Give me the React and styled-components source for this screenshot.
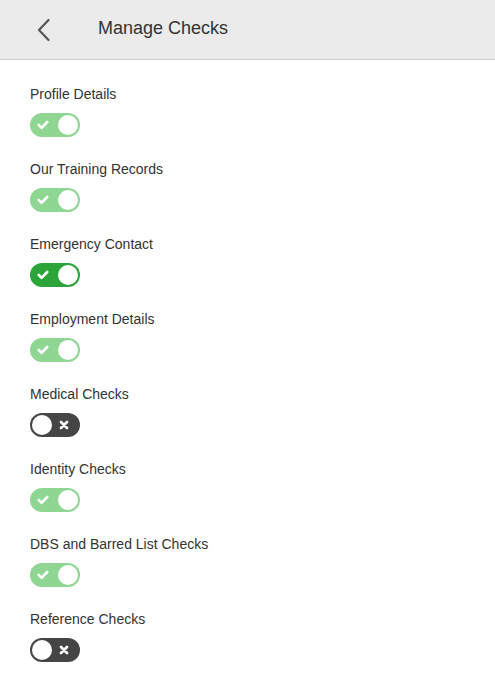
import React from "react";
import styled, { createGlobalStyle } from "styled-components";

const Global = createGlobalStyle`
  html, body { margin: 0; padding: 0; background: #fff; }
  body { font-family: "Liberation Sans", Arial, Helvetica, sans-serif; color: #333; }
`;

const Page = styled.div`
  width: 495px;
  min-height: 682px;
  background: #fff;
`;

const Header = styled.header`
  height: 59px;
  background: #ebebeb;
  border-bottom: 1px solid #cfcfcf;
  display: flex;
  align-items: center;
`;

const BackButton = styled.button`
  width: 98px;
  height: 59px;
  padding: 0 0 0 37px;
  border: 0;
  background: transparent;
  display: flex;
  align-items: center;
  cursor: pointer;
`;

const Title = styled.h1`
  margin: 0;
  font-family: "Liberation Sans", Arial, Helvetica, sans-serif;
  font-size: 18px;
  font-weight: 400;
  color: #333;
  line-height: 22px;
  padding-bottom: 4px;
`;

const List = styled.div`
  padding: 24px 30px 0;
  display: flex;
  flex-direction: column;
  gap: 22px;
`;

const Row = styled.div`
  display: flex;
  flex-direction: column;
  align-items: flex-start;
  gap: 9px;
`;

const Label = styled.div`
  font-size: 14px;
  line-height: 20px;
  color: #333;
`;

const Track = styled.div`
  position: relative;
  width: 50px;
  height: 24px;
  border-radius: 12px;
  background: ${(p) => (p.$on ? (p.$strong ? "#2ba43a" : "#8fd693") : "#454545")};
  display: flex;
  align-items: center;
  justify-content: ${(p) => (p.$on ? "flex-end" : "flex-start")};
  padding: 0 2px;
  box-sizing: border-box;
`;

const Knob = styled.div`
  width: 20px;
  height: 20px;
  border-radius: 50%;
  background: #fff;
`;

const Mark = styled.svg`
  position: absolute;
  top: 50%;
  transform: translateY(-50%);
  left: ${(p) => p.$left}px;
`;

function Toggle({ on, strong }) {
  return (
    <Track $on={on} $strong={strong}>
      {on ? (
        <Mark $left={7} width="12" height="10" viewBox="0 0 12 10">
          <path d="M1.8 5 L4.6 7.8 L10.2 2" fill="none" stroke="#fff" strokeWidth="2.6" strokeLinecap="round" strokeLinejoin="round" />
        </Mark>
      ) : (
        <Mark $left={29} width="10" height="10" viewBox="0 0 10 10">
          <path d="M2 2 L8 8 M8 2 L2 8" fill="none" stroke="#fff" strokeWidth="2.8" strokeLinecap="round" />
        </Mark>
      )}
      <Knob />
    </Track>
  );
}

const items = [
  { label: "Profile Details", on: true },
  { label: "Our Training Records", on: true },
  { label: "Emergency Contact", on: true, strong: true },
  { label: "Employment Details", on: true },
  { label: "Medical Checks", on: false },
  { label: "Identity Checks", on: true },
  { label: "DBS and Barred List Checks", on: true },
  { label: "Reference Checks", on: false },
];

export default function App() {
  return (
    <Page>
      <Global />
      <Header>
        <BackButton aria-label="Back">
          <svg width="14" height="24" viewBox="0 0 14 24">
            <path d="M11.5 2 L2 12 L11.5 22" fill="none" stroke="#555" strokeWidth="2.2" strokeLinecap="round" strokeLinejoin="round" />
          </svg>
        </BackButton>
        <Title>Manage Checks</Title>
      </Header>
      <List>
        {items.map((it) => (
          <Row key={it.label}>
            <Label>{it.label}</Label>
            <Toggle on={it.on} strong={it.strong} />
          </Row>
        ))}
      </List>
    </Page>
  );
}
